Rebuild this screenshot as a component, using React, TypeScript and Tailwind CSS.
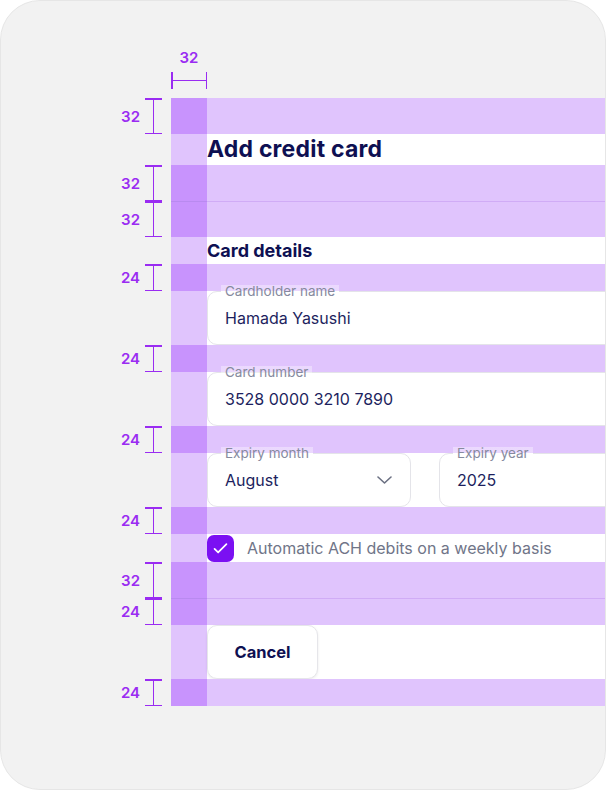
import type { ReactNode } from "react";

const font = { fontFamily: "Inter, 'Liberation Sans', sans-serif" };

// vertical bracket with a number, sits in the left gutter next to a spacing band
function Marker({ value }: { value: number }) {
  return (
    <div className="flex h-full items-center justify-end pr-[9px]">
      <span className="mr-[5px] text-[15px] font-semibold leading-none text-[#9a2cf2]">
        {value}
      </span>
      <div className="flex h-full w-[17px] flex-col items-center">
        <div className="h-[1.5px] w-full bg-[#9a2cf2]" />
        <div className="w-[1.5px] flex-1 bg-[#9a2cf2]" />
        <div className="h-[1.5px] w-full bg-[#9a2cf2]" />
      </div>
    </div>
  );
}

function Band({ value, line }: { value: number; line?: boolean }) {
  const h = value === 32 ? "h-[36px]" : "h-[27px]";
  return (
    <div className={`grid grid-cols-[170px_36px_1fr] ${h}`}>
      <Marker value={value} />
      <div className={`bg-[#c893fd] ${line ? "border-t border-[#b98af0]" : ""}`} />
      <div className={`bg-[#e0c4fd] ${line ? "border-t border-[#d0acf6]" : ""}`} />
    </div>
  );
}

function Row({ h, children }: { h: string; children: ReactNode }) {
  return (
    <div className={`grid grid-cols-[170px_36px_1fr] ${h}`}>
      <div />
      <div className="bg-[#e0c4fd]" />
      <div className="bg-white">{children}</div>
    </div>
  );
}

function Field({
  label,
  value,
  width,
  chevron,
}: {
  label: string;
  value: string;
  width: string;
  chevron?: boolean;
}) {
  return (
    <div
      className={`relative flex h-[54px] shrink-0 items-center rounded-[10px] border border-[#e4e4e9] bg-white pl-[17px] pr-[18px] ${width}`}
    >
      <span className="absolute left-[13px] top-[-7px] bg-[linear-gradient(to_bottom,rgba(255,255,255,0.35)_50%,#fff_50%)] px-[4px] text-[13.5px] leading-[13px] text-[#868a9e]">
        {label}
      </span>
      <span className="flex-1 text-[16px] text-[#1d1f5e]">{value}</span>
      {chevron && (
        <svg width="15" height="8" viewBox="0 0 15 8" fill="none">
          <path
            d="M1 1 7.5 7 14 1"
            stroke="#6b7082"
            strokeWidth="1.6"
            strokeLinecap="round"
            strokeLinejoin="round"
          />
        </svg>
      )}
    </div>
  );
}

export default function App() {
  return (
    <div className="h-[790px] w-[606px] bg-white" style={font}>
      <div className="h-[790px] w-[606px] overflow-hidden rounded-[40px] border border-[#e6e6e6] bg-[#f2f2f2]">
        {/* top width marker */}
        <div className="grid h-[97px] grid-cols-[170px_36px_1fr]">
          <div />
          <div className="flex flex-col items-center pt-[48px]">
            <span className="h-[18px] text-[15px] font-semibold leading-[18px] text-[#9a2cf2]">
              32
            </span>
            <div className="mt-[5px] flex h-[17px] w-full items-center">
              <div className="h-full w-[1.5px] bg-[#9a2cf2]" />
              <div className="h-[1.5px] flex-1 bg-[#9a2cf2]" />
              <div className="h-full w-[1.5px] bg-[#9a2cf2]" />
            </div>
          </div>
        </div>

        <Band value={32} />
        <Row h="h-[31px]">
          <h1 className="text-[23px] font-bold leading-[31px] tracking-[0.2px] text-[#0e1052]">
            Add credit card
          </h1>
        </Row>
        <Band value={32} />
        <Band value={32} line />
        <Row h="h-[27px]">
          <h2 className="text-[18px] font-bold leading-[27px] text-[#0e1052]">Card details</h2>
        </Row>
        <Band value={24} />
        <Row h="h-[54px]">
          <Field label="Cardholder name" value="Hamada Yasushi" width="w-[440px]" />
        </Row>
        <Band value={24} />
        <Row h="h-[54px]">
          <Field label="Card number" value="3528 0000 3210 7890" width="w-[440px]" />
        </Row>
        <Band value={24} />
        <Row h="h-[54px]">
          <div className="flex gap-[28px]">
            <Field label="Expiry month" value="August" width="w-[204px]" chevron />
            <Field label="Expiry year" value="2025" width="w-[204px]" />
          </div>
        </Row>
        <Band value={24} />
        <Row h="h-[28px]">
          <div className="flex h-full items-center">
            <div className="flex h-[27px] w-[27px] items-center justify-center rounded-[7px] bg-[#7b10f2]">
              <svg width="19" height="19" viewBox="0 0 24 24" fill="none">
                <path
                  d="M4.5 12.5l4.5 4.5L19.5 6.5"
                  stroke="white"
                  strokeWidth="2.2"
                  strokeLinecap="round"
                  strokeLinejoin="round"
                />
              </svg>
            </div>
            <span className="ml-[13px] text-[16px] text-[#707588]">
              Automatic ACH debits on a weekly basis
            </span>
          </div>
        </Row>
        <Band value={32} />
        <Band value={24} line />
        <Row h="h-[54px]">
          <button className="h-[54px] w-[111px] rounded-[10px] border border-[#e6e6ea] bg-white text-[16.5px] font-bold text-[#0e1052] shadow-[0_1px_3px_rgba(0,0,0,0.08)]">
            Cancel
          </button>
        </Row>
        <Band value={24} />
      </div>
    </div>
  );
}
